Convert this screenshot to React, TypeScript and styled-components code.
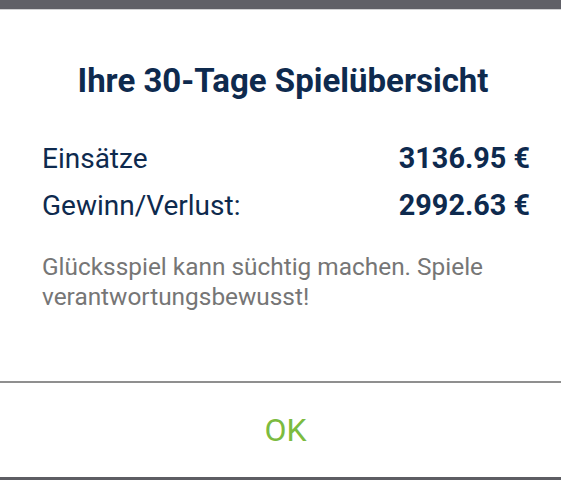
import React from "react";
import styled, { createGlobalStyle } from "styled-components";

const GlobalStyle = createGlobalStyle`
  html, body {
    margin: 0;
    padding: 0;
    background: #ffffff;
  }
  body {
    font-family: Roboto, "Liberation Sans", Arial, sans-serif;
  }
`;

const Screen = styled.div`
  display: flex;
  flex-direction: column;
  width: 561px;
  height: 480px;
  background: #ffffff;
  overflow: hidden;
`;

const StatusStrip = styled.div`
  height: 9px;
  background: #606067;
  border-bottom: 1px solid #d2d2d4;
  flex-shrink: 0;
`;

const Body = styled.div`
  flex: 1;
  display: flex;
  flex-direction: column;
  padding: 51px 31px 0 42px;
`;

const Title = styled.h1`
  margin: 0 0 34px -6px;
  font-size: 33px;
  line-height: 40px;
  font-weight: 700;
  color: #0e2a4e;
  text-align: center;
`;

const Row = styled.div`
  display: flex;
  justify-content: space-between;
  align-items: baseline;
  font-size: 28px;
  line-height: 46px;
  color: #0e2a4e;
`;

const Label = styled.span`
  font-weight: 400;
`;

const Amount = styled.span`
  font-weight: 700;
  font-size: 28.8px;
`;

const Note = styled.p`
  margin: 23px 0 0;
  font-size: 24.4px;
  line-height: 30px;
  color: #767676;
`;

const Divider = styled.div`
  height: 2px;
  background: #8f8f8f;
  flex-shrink: 0;
`;

const OkButton = styled.button`
  height: 94px;
  flex-shrink: 0;
  border: none;
  padding: 0 0 0 10px;
  background: #ffffff;
  font-family: Roboto, "Liberation Sans", Arial, sans-serif;
  font-size: 32px;
  font-weight: 400;
  color: #7cbb3f;
  cursor: pointer;
`;

const BottomStrip = styled.div`
  height: 3px;
  background: #5d5d63;
  flex-shrink: 0;
`;

const rows = [
  { label: "Einsätze", value: "3136.95 €" },
  { label: "Gewinn/Verlust:", value: "2992.63 €" },
];

export default function App() {
  return (
    <Screen>
      <GlobalStyle />
      <StatusStrip />
      <Body>
        <Title>Ihre 30-Tage Spielübersicht</Title>
        {rows.map((r) => (
          <Row key={r.label}>
            <Label>{r.label}</Label>
            <Amount>{r.value}</Amount>
          </Row>
        ))}
        <Note>
          Glücksspiel kann süchtig machen. Spiele verantwortungsbewusst!
        </Note>
      </Body>
      <Divider />
      <OkButton>OK</OkButton>
      <BottomStrip />
    </Screen>
  );
}
